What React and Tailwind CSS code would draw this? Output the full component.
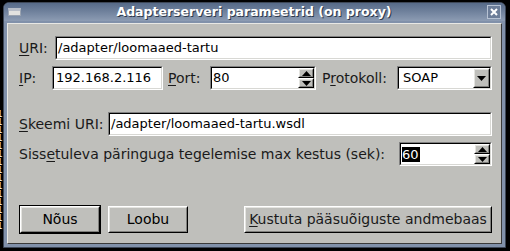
import React from "react";

const font = "font-['DejaVu_Sans','Liberation_Sans',sans-serif]";

function Sunken({ className = "", children }) {
  return (
    <div className={`border border-t-[#808080] border-l-[#808080] border-b-white border-r-white ${className}`}>
      <div className="h-full w-full border border-t-black border-l-black border-b-[#d8d8d4] border-r-[#d8d8d4] bg-white flex items-center">
        {children}
      </div>
    </div>
  );
}

function Raised({ className = "", children }) {
  return (
    <div className={`border border-t-white border-l-white border-b-black border-r-black ${className}`}>
      <div className="h-full w-full border border-t-[#e4e4e0] border-l-[#e4e4e0] border-b-[#7f7f7c] border-r-[#7f7f7c] bg-[#bfbfbb] flex items-center justify-center">
        {children}
      </div>
    </div>
  );
}

function Arrow({ up }) {
  return (
    <svg width="9" height="5" viewBox="0 0 9 5">
      {up ? <polygon points="0,5 9,5 4.5,0" fill="#000" /> : <polygon points="0,0 9,0 4.5,5" fill="#000" />}
    </svg>
  );
}

function Spinner() {
  return (
    <div className="flex flex-col w-[16px] h-full">
      <Raised className="flex-1">
        <Arrow up />
      </Raised>
      <Raised className="flex-1">
        <Arrow />
      </Raised>
    </div>
  );
}

function Label({ pre = "", u, post = "", className = "" }) {
  return (
    <span className={`text-[14px] text-[#1a1a1a] whitespace-nowrap ${className}`}>
      {pre}
      <span className="underline underline-offset-2">{u}</span>
      {post}
    </span>
  );
}

export default function App() {
  return (
    <div className={`w-[510px] h-[251px] bg-black flex overflow-hidden ${font}`}>
      {/* bits of the window behind */}
      <div className="w-[3px] overflow-hidden pt-[110px]">
        <div className="-ml-[3px] text-white text-[9px] leading-[8px] whitespace-pre">
          {"1\n1\n1\n1\n1\n1\n1\n1\n1\n1\n1\n1\n1\n1\n1"}
        </div>
      </div>

      <div className="mt-[2px] w-[503px] h-[246px] rounded-t-[6px] border border-[#3d4757] bg-[#8191aa] flex flex-col">
        {/* title bar */}
        <div className="h-[18px] rounded-t-[5px] bg-gradient-to-b from-[#566a88] to-[#8d9cb3] flex items-center px-[4px]">
          <div className="w-[13px] h-[8px] border border-[#9aa3b0] bg-[#e2e2e0] border-t-[3px] border-t-[#b8bec8]" />
          <div className="flex-1 text-center text-white text-[12.5px] font-bold [text-shadow:1px_1px_0_#2e3a4c] leading-none">
            Adapterserveri parameetrid (on proxy)
          </div>
          <div className="w-[14px] h-[14px] border border-[#b7c2d3] bg-[#6d7e99] flex items-center justify-center">
            <svg width="8" height="8" viewBox="0 0 8 8">
              <path d="M1 1 L7 7 M7 1 L1 7" stroke="#fff" strokeWidth="2" />
            </svg>
          </div>
        </div>

        {/* body */}
        <div className="flex-1 mx-[3px] mb-[3px] mt-[2px] border border-t-[#e8e8e4] border-l-[#e8e8e4] border-b-[#3a3a3a] border-r-[#3a3a3a] bg-[#bfbfbb] pl-[11px] pr-[9px] pt-[12px] flex flex-col">
          <div className="flex items-center h-[24px]">
            <Label u="U" post="RI:" className="w-[36px]" />
            <Sunken className="flex-1 h-full">
              <span className="text-[13px] pl-[1px]">/adapter/loomaaed-tartu</span>
            </Sunken>
          </div>

          <div className="flex items-center h-[24px] mt-[6px]">
            <Label u="I" post="P:" className="w-[33px]" />
            <Sunken className="w-[111px] h-full">
              <span className="text-[13px] pl-[2px]">192.168.2.116</span>
            </Sunken>
            <Label u="P" post="ort:" className="ml-[5px] w-[42px]" />
            <Sunken className="w-[106px] h-full">
              <span className="text-[13px] pl-[1px] flex-1">80</span>
              <Spinner />
            </Sunken>
            <Label pre="P" u="r" post="otokoll:" className="ml-[6px] w-[75px]" />
            <Sunken className="flex-1 h-full">
              <span className="text-[13px] pl-[4px] flex-1">SOAP</span>
              <Raised className="w-[17px] h-full">
                <Arrow />
              </Raised>
            </Sunken>
          </div>

          <div className="flex items-center h-[24px] mt-[22px]">
            <Label u="S" post="keemi URI:" className="w-[89px]" />
            <Sunken className="flex-1 h-full">
              <span className="text-[13px] pl-[1px]">/adapter/loomaaed-tartu.wsdl</span>
            </Sunken>
          </div>

          <div className="flex items-center h-[24px] mt-[6px]">
            <Label pre="Siss" u="e" post="tuleva päringuga tegelemise max kestus (sek):" className="flex-1 text-[13.8px]" />
            <Sunken className="w-[93px] h-full">
              <span className="flex-1 pl-[1px]">
                <span className="text-[13px] bg-black text-white pr-[1px]">60</span>
              </span>
              <Spinner />
            </Sunken>
          </div>

          <div className="flex items-center h-[29px] mt-[39px]">
            <div className="w-[82px] h-full border border-black">
              <Raised className="h-full">
                <span className="text-[14px]">Nõus</span>
              </Raised>
            </div>
            <Raised className="w-[80px] h-[27px] ml-[7px]">
              <span className="text-[14px]">Loobu</span>
            </Raised>
            <div className="flex-1" />
            <Raised className="w-[248px] h-[27px]">
              <Label u="K" post="ustuta pääsuõiguste andmebaas" />
            </Raised>
          </div>
        </div>
      </div>
    </div>
  );
}
